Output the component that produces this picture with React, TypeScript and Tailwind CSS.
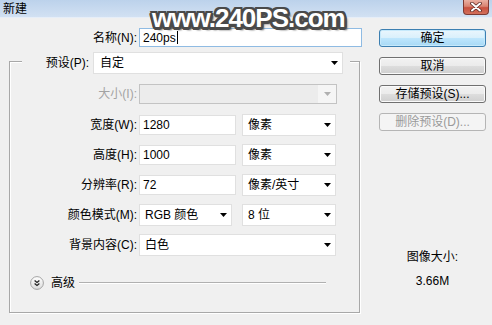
import React from "react";

const FONT = "font-['Liberation_Sans','Noto_Sans_CJK_SC',sans-serif]";

function Arrow({ color = "#000" }: { color?: string }) {
  return (
    <svg width="7" height="4" viewBox="0 0 7 4" className="shrink-0">
      <polygon points="0,0 7,0 3.5,4" fill={color} />
    </svg>
  );
}

function Select({ text, className }: { text: string; className: string }) {
  return (
    <div
      className={`h-[22px] bg-white border border-[#e0e0e0] flex items-center justify-between pl-[5px] pr-[4px] text-[12px] text-black ${className}`}
    >
      <span>{text}</span>
      <Arrow />
    </div>
  );
}

function Input({ text, className }: { text: string; className: string }) {
  return (
    <div
      className={`h-[20px] bg-white border border-[#e0e0e0] flex items-center pl-[3px] text-[12px] text-black ${className}`}
    >
      {text}
    </div>
  );
}

function Label({ text, disabled }: { text: string; disabled?: boolean }) {
  return (
    <div
      className={`w-[127px] text-right text-[12px] leading-none ${disabled ? "text-[#a3a3a3]" : "text-black"}`}
    >
      {text}
    </div>
  );
}

function Button({
  text,
  kind = "normal",
}: {
  text: string;
  kind?: "normal" | "default" | "disabled";
}) {
  const cls =
    kind === "default"
      ? "border-[#3c7fb1] bg-[linear-gradient(#eaf6fd,#d9f0fc_50%,#bee6fd_51%,#a7d9f5)] shadow-[inset_0_0_0_1px_#c6e9fb] text-black"
      : kind === "disabled"
      ? "border-[#b5b5b5] bg-[#f4f4f4] text-[#9a9a9a]"
      : "border-[#707070] bg-[linear-gradient(#f2f2f2,#ebebeb_50%,#dddddd_51%,#cfcfcf)] shadow-[inset_0_0_0_1px_#fafafa] text-black";
  return (
    <div
      className={`h-[18px] w-[107px] rounded-[3px] border flex items-center justify-center text-[12px] leading-none ${cls}`}
    >
      {text}
    </div>
  );
}

export default function App() {
  return (
    <div
      className={`relative w-[492px] h-[325px] overflow-hidden bg-[#f0f0f0] ${FONT}`}
    >
      {/* Title bar */}
      <div className="h-[18px] flex justify-between bg-[linear-gradient(#bcd2eb,#d2e1f3)] border-b border-[#e6eef8]">
        <div className="pl-[3px] pt-[2px] text-[12px] leading-[14px] text-black">
          新建
        </div>
        <div className="mr-[3px] w-[26px] h-[15px] rounded-b-[4px] border border-t-0 border-[#7d3a33] bg-[linear-gradient(#eab0a2,#d98472_45%,#c8503e_55%,#d2705c)] flex items-center justify-center">
          <svg width="12" height="10" viewBox="0 0 12 10">
            <path d="M2 1.5 L10 8.5 M10 1.5 L2 8.5" stroke="#5a2a24" strokeWidth="3.6" strokeLinecap="round" />
            <path d="M2 1.5 L10 8.5 M10 1.5 L2 8.5" stroke="#ffffff" strokeWidth="2" strokeLinecap="round" />
          </svg>
        </div>
      </div>

      {/* Body */}
      <div className="flex">
        {/* Left column */}
        <div className="w-[365px] flex flex-col">
          {/* Name row */}
          <div className="mt-[10px] h-[19px] flex items-center">
            <div className="w-[137px] text-right text-[12px] leading-none text-black">
              名称(N):
            </div>
            <div className="ml-[2px] w-[223px] h-[19px] bg-white border border-[#8fbbe3] flex items-center pl-[3px] text-[12px] text-black">
              240ps
              <span className="ml-[1px] w-px h-[13px] bg-black" />
            </div>
          </div>

          {/* Group box */}
          <div className="mt-[14px] ml-[9px] w-[351px] h-[252px] border border-[#a8a8a8] shadow-[inset_1px_1px_0_#ffffff,1px_1px_0_#ffffff] flex flex-col">
            {/* Preset row (legend) */}
            <div className="-mt-[10px] ml-[12px] w-[328px] h-[22px] bg-[#f0f0f0] flex items-center">
              <div className="w-[67px] text-right text-[12px] leading-none text-black">
                预设(P):
              </div>
              <Select text="自定" className="ml-[4px] w-[250px] pl-[6px]" />
            </div>

            {/* Size row (disabled) */}
            <div className="mt-[10px] h-[20px] flex items-center">
              <Label text="大小(I):" disabled />
              <div className="ml-[2px] w-[198px] h-[20px] border border-[#c3c3c3] bg-[#ececec] flex justify-end">
                <div className="w-[18px] h-full bg-[#f5f5f5] flex items-center justify-center">
                  <Arrow color="#b0b0b0" />
                </div>
              </div>
            </div>

            {/* Width */}
            <div className="mt-[10px] h-[22px] flex items-center">
              <Label text="宽度(W):" />
              <Input text="1280" className="ml-[2px] w-[97px]" />
              <Select text="像素" className="ml-[6px] w-[94px]" />
            </div>

            {/* Height */}
            <div className="mt-[8px] h-[22px] flex items-center">
              <Label text="高度(H):" />
              <Input text="1000" className="ml-[2px] w-[97px]" />
              <Select text="像素" className="ml-[6px] w-[94px]" />
            </div>

            {/* Resolution */}
            <div className="mt-[8px] h-[22px] flex items-center">
              <Label text="分辨率(R):" />
              <Input text="72" className="ml-[2px] w-[97px]" />
              <Select text="像素/英寸" className="ml-[6px] w-[94px]" />
            </div>

            {/* Color mode */}
            <div className="mt-[8px] h-[22px] flex items-center">
              <Label text="颜色模式(M):" />
              <Select text="RGB 颜色" className="ml-[2px] w-[93px]" />
              <Select text="8 位" className="ml-[10px] w-[94px]" />
            </div>

            {/* Background */}
            <div className="mt-[8px] h-[22px] flex items-center">
              <Label text="背景内容(C):" />
              <Select text="白色" className="ml-[2px] w-[197px]" />
            </div>

            {/* Advanced */}
            <div className="mt-[19px] h-[16px] flex items-center">
              <svg width="14" height="14" viewBox="0 0 14 14" className="ml-[20px] shrink-0">
                <defs>
                  <linearGradient id="adv" x1="0" y1="0" x2="0" y2="1">
                    <stop offset="0" stopColor="#ffffff" />
                    <stop offset="1" stopColor="#dcdcdc" />
                  </linearGradient>
                </defs>
                <circle cx="7" cy="7" r="6.4" fill="url(#adv)" stroke="#a3a3a3" strokeWidth="1" />
                <path d="M4.6 4.4 L7 6.4 L9.4 4.4" fill="none" stroke="#222" strokeWidth="1.3" />
                <path d="M4.6 7.4 L7 9.4 L9.4 7.4" fill="none" stroke="#222" strokeWidth="1.3" />
              </svg>
              <div className="ml-[7px] text-[12px] leading-none text-black">高级</div>
              <div className="ml-[4px] w-[247px] h-[2px] border-t border-[#b0b0b0] border-b border-b-white" />
            </div>
          </div>
        </div>

        {/* Right column */}
        <div className="ml-[14px] w-[107px] flex flex-col">
          <div className="mt-[11px] flex flex-col gap-[10px]">
            <Button text="确定" kind="default" />
            <Button text="取消" />
            <Button text="存储预设(S)..." />
            <Button text="删除预设(D)..." kind="disabled" />
          </div>
          <div className="mt-[118px] h-[16px] flex items-center justify-center text-[12px] text-black">
            图像大小:
          </div>
          <div className="mt-[8px] h-[16px] flex items-center justify-center text-[12px] text-black">
            3.66M
          </div>
        </div>
      </div>

      {/* Watermark overlay */}
      <div className="absolute left-[152px] top-[5px] text-[26px] leading-none font-bold tracking-[-1px] text-white font-['Liberation_Sans',sans-serif] [text-shadow:2.5px_0_#4a4a4a,-2.5px_0_#4a4a4a,0_2.5px_#4a4a4a,0_-2.5px_#4a4a4a,2px_2px_#4a4a4a,-2px_-2px_#4a4a4a,2px_-2px_#4a4a4a,-2px_2px_#4a4a4a,1px_2.5px_#4a4a4a,-1px_2.5px_#4a4a4a,2.5px_1px_#4a4a4a,-2.5px_1px_#4a4a4a,3px_3px_2px_#4a4a4a]">
        www.240PS.com
      </div>
    </div>
  );
}
